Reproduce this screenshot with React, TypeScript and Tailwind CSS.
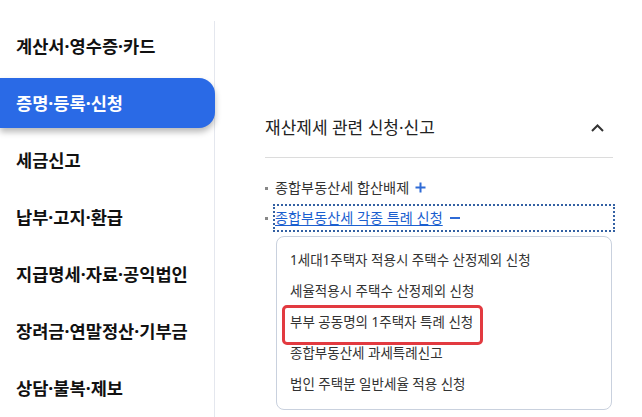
import React from "react";

const menu = [
  "계산서·영수증·카드",
  "증명·등록·신청",
  "세금신고",
  "납부·고지·환급",
  "지급명세·자료·공익법인",
  "장려금·연말정산·기부금",
  "상담·불복·제보",
];

const subs = [
  "1세대1주택자 적용시 주택수 산정제외 신청",
  "세율적용시 주택수 산정제외 신청",
  "부부 공동명의 1주택자 특례 신청",
  "종합부동산세 과세특례신고",
  "법인 주택분 일반세율 적용 신청",
];

export default function App() {
  return (
    <div
      className="flex w-[642px] h-[417px] bg-white overflow-hidden"
      style={{ fontFamily: '"Noto Sans", "Noto Sans CJK KR", sans-serif' }}
    >
      <aside className="w-[215px] shrink-0 mt-[21px] flex flex-col gap-[7px] border-r border-[#e4e7ee]">
        {menu.map((m, i) =>
          i === 1 ? (
            <div
              key={m}
              className="h-[50px] flex items-center pl-[16px] bg-[#2a6ae6] text-white rounded-r-[16px] text-[17.6px] font-bold shadow-[0_4px_6px_rgba(0,0,0,0.28)] -mr-px"
            >
              {m}
            </div>
          ) : (
            <div
              key={m}
              className="h-[50px] flex items-center pl-[16px] text-[#111] text-[17.6px] font-bold"
            >
              {m}
            </div>
          )
        )}
      </aside>
      <main className="flex-1 pl-[50px] pr-[29px] pt-[98px]">
        <div className="h-[60px] flex items-center justify-between border-b border-[#dcdcdc] pr-[9px]">
          <span className="text-[17px] text-[#222]">재산제세 관련 신청·신고</span>
          <svg width="13" height="8" viewBox="0 0 13 8" fill="none">
            <path d="M1 7L6.5 1.5L12 7" stroke="#333" strokeWidth="2" />
          </svg>
        </div>
        <ul className="mt-[18px] flex flex-col gap-[6px]">
          <li className="flex items-center h-[24px]">
            <span className="w-[3px] h-[3px] bg-[#888] mr-[7px] shrink-0" />
            <span className="text-[14.2px] text-[#333] flex items-center">
              종합부동산세 합산배제
              <svg className="ml-[6px]" width="11" height="11" viewBox="0 0 11 11">
                <path d="M5.5 0.5V10.5M0.5 5.5H10.5" stroke="#2f6bd6" strokeWidth="2" />
              </svg>
            </span>
          </li>
          <li className="flex items-center h-[24px]">
            <span className="w-[3px] h-[3px] bg-[#888] mr-[7px] shrink-0" />
            <span className="flex-1 h-full flex items-center outline-2 outline-dotted outline-[#3461a3]">
              <span className="text-[14.2px] text-[#1b5fcf] underline underline-offset-2">
                종합부동산세 각종 특례 신청
              </span>
              <span className="ml-[7px] w-[10px] h-[2px] bg-[#2f6bd6]" />
            </span>
          </li>
        </ul>
        <div className="mt-[6px] ml-[11px] mr-px border border-[#c9d1de] rounded-[8px] pt-[8px] pb-[9px] pl-[13px]">
          {subs.map((s, i) => (
            <div key={s} className="relative h-[31px] flex items-center text-[13.5px] text-[#333]">
              {s}
              {i === 2 && (
                <span className="absolute left-[-8px] top-[-2px] w-[201px] h-[40px] border-[3px] border-[#e23a40] rounded-[5px]" />
              )}
            </div>
          ))}
        </div>
      </main>
    </div>
  );
}
